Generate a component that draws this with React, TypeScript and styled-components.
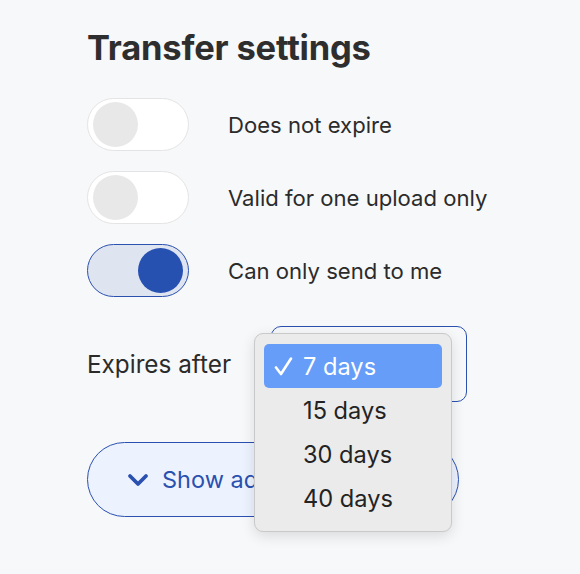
import React from "react";
import styled, { createGlobalStyle } from "styled-components";

const Global = createGlobalStyle`
  html, body { margin: 0; padding: 0; background: #f7f8fa; }
  body { font-family: Inter, "Noto Sans", sans-serif; color: #2b2b2b; }
`;

const Page = styled.div`
  width: 580px;
  height: 574px;
  box-sizing: border-box;
  padding: 25px 0 0 87px;
  display: flex;
  flex-direction: column;
  overflow: hidden;
`;

const Title = styled.h2`
  margin: 0;
  font-size: 34.5px;
  line-height: 46px;
  font-weight: 700;
  letter-spacing: -0.2px;
  color: #2e2e2e;
`;

const ToggleList = styled.div`
  margin-top: 27px;
  display: flex;
  flex-direction: column;
  gap: 20px;
`;

const Row = styled.div`
  display: flex;
  align-items: center;
  gap: 39px;
`;

const Track = styled.div<{ $on?: boolean }>`
  width: 102px;
  height: 53px;
  box-sizing: border-box;
  border-radius: 27px;
  border: 1px solid ${(p) => (p.$on ? "#2a50b0" : "#e4e4e4")};
  background: ${(p) => (p.$on ? "#dfe4f1" : "#ffffff")};
  display: flex;
  align-items: center;
  justify-content: ${(p) => (p.$on ? "flex-end" : "flex-start")};
  padding: 0 5px;
  flex-shrink: 0;
`;

const Knob = styled.div<{ $on?: boolean }>`
  width: 45px;
  height: 45px;
  border-radius: 50%;
  background: ${(p) => (p.$on ? "#2651b1" : "#e8e8e8")};
`;

const Label = styled.span<{ $large?: boolean }>`
  font-size: ${(p) => (p.$large ? "24.3px" : "22.1px")};
  color: #2b2b2b;
`;

const ExpiresRow = styled.div`
  margin-top: 29px;
  display: flex;
  align-items: center;
  gap: 40px;
`;

const SelectWrap = styled.div`
  position: relative;
  width: 196px;
  height: 76px;
`;

const SelectBox = styled.div`
  width: 100%;
  height: 100%;
  box-sizing: border-box;
  border: 1px solid #2a50b0;
  border-radius: 10px;
  background: #f7f8fa;
`;

const Popup = styled.div`
  position: absolute;
  left: -17px;
  top: 7px;
  width: 198px;
  box-sizing: border-box;
  padding: 10px 9px 11px;
  background: #ebebeb;
  border: 1px solid #c9c9c9;
  border-radius: 9px;
  box-shadow: 0 4px 14px rgba(0, 0, 0, 0.12);
  display: flex;
  flex-direction: column;
  z-index: 2;
`;

const Option = styled.div<{ $selected?: boolean }>`
  height: 44px;
  border-radius: 5px;
  display: flex;
  align-items: center;
  padding-left: 10px;
  gap: 10px;
  font-size: 23.6px;
  color: ${(p) => (p.$selected ? "#ffffff" : "#232323")};
  background: ${(p) => (p.$selected ? "#669df8" : "transparent")};
`;

const CheckSlot = styled.span`
  width: 19px;
  display: flex;
  align-items: center;
  justify-content: center;
`;

const AdvancedButton = styled.button`
  margin-top: 40px;
  width: 372px;
  height: 75px;
  box-sizing: border-box;
  border: 1px solid #2a50b0;
  border-radius: 38px;
  background: #edf3fe;
  color: #2a50b0;
  font-family: inherit;
  font-size: 23.5px;
  display: flex;
  align-items: center;
  gap: 13px;
  padding: 0 0 0 39px;
  text-align: left;
`;

const options = ["7 days", "15 days", "30 days", "40 days"];

const toggles = [
  { label: "Does not expire", on: false },
  { label: "Valid for one upload only", on: false },
  { label: "Can only send to me", on: true },
];

export default function App() {
  return (
    <>
      <Global />
      <Page>
        <Title>Transfer settings</Title>
        <ToggleList>
          {toggles.map((t) => (
            <Row key={t.label}>
              <Track $on={t.on}>
                <Knob $on={t.on} />
              </Track>
              <Label>{t.label}</Label>
            </Row>
          ))}
        </ToggleList>
        <ExpiresRow>
          <Label $large>Expires after</Label>
          <SelectWrap>
            <SelectBox />
            <Popup>
              {options.map((o, i) => (
                <Option key={o} $selected={i === 0}>
                  <CheckSlot>
                    {i === 0 && (
                      <svg width="19" height="19" viewBox="0 0 19 19">
                        <path
                          d="M2 10.5 L7 17 L17 1.5"
                          fill="none"
                          stroke="#fff"
                          strokeWidth="2.6"
                          strokeLinecap="round"
                          strokeLinejoin="round"
                        />
                      </svg>
                    )}
                  </CheckSlot>
                  {o}
                </Option>
              ))}
            </Popup>
          </SelectWrap>
        </ExpiresRow>
        <AdvancedButton>
          <svg width="22" height="14" viewBox="0 0 22 14">
            <path
              d="M3 3 L11 11 L19 3"
              fill="none"
              stroke="#2a50b0"
              strokeWidth="3.8"
              strokeLinecap="round"
              strokeLinejoin="round"
            />
          </svg>
          Show advanced settings
        </AdvancedButton>
      </Page>
    </>
  );
}
